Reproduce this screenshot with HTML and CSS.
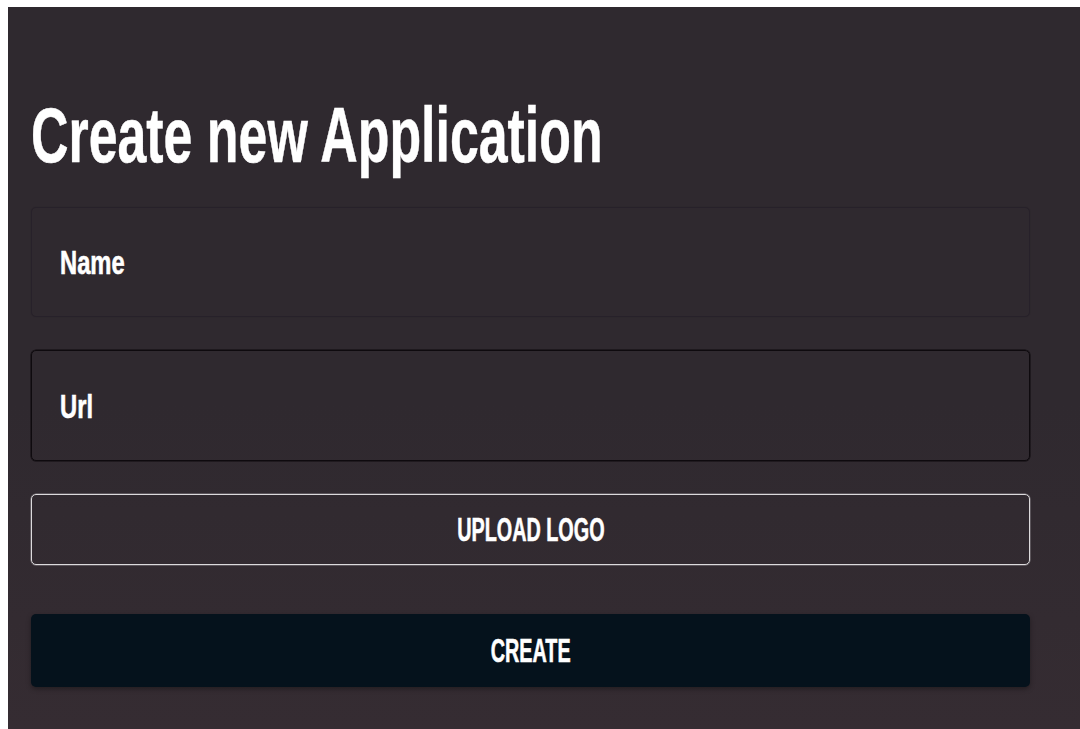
FILE: index.html
```html
<!DOCTYPE html>
<html lang="en">
<head>
<meta charset="utf-8">
<title>Create new Application</title>
<link rel="stylesheet" href="styles.css">
</head>
<body>
  <main class="panel">
    <form class="app-form" onsubmit="return false">
      <h1 class="title"><span class="narrow narrow-title">Create new Application</span></h1>

      <label class="field field-soft">
        <span class="narrow narrow-label">Name</span>
      </label>

      <label class="field field-dark">
        <span class="narrow narrow-label">Url</span>
      </label>

      <button type="button" class="btn btn-outline">
        <span class="narrow narrow-caps">UPLOAD LOGO</span>
      </button>

      <button type="submit" class="btn btn-solid">
        <span class="narrow narrow-caps">CREATE</span>
      </button>
    </form>
  </main>
</body>
</html>
```

FILE: styles.css
```css
html, body {
  height: 100%;
}

body {
  margin: 0;
  padding: 7px 0 0 8px;
  box-sizing: border-box;
  background: #ffffff;
  font-family: "Liberation Sans", Arial, sans-serif;
  color: #ffffff;
  overflow: hidden;
}

.panel {
  height: 100%;
  background: linear-gradient(180deg, #2f292f 0%, #2f292f 55%, #352c32 100%);
  padding: 89px 0 0 23px;
  box-sizing: border-box;
}

.app-form {
  width: 999px;
  display: flex;
  flex-direction: column;
}

/* condensed display face: Liberation Sans squeezed horizontally */
.narrow {
  display: inline-block;
  white-space: nowrap;
  font-weight: 700;
  -webkit-text-stroke: 0.6px #ffffff;
}

.narrow-title {
  transform: scaleX(0.665);
  transform-origin: left center;
  -webkit-text-stroke: 0.5px #ffffff;
}

.narrow-label {
  transform: scaleX(0.72);
  transform-origin: left center;
}

.narrow-caps {
  transform: scaleX(0.6);
  transform-origin: center center;
}

.title {
  margin: 0 0 33px 0;
  font-size: 78px;
  line-height: 78px;
  font-weight: 700;
}

.field {
  height: 110px;
  box-sizing: border-box;
  border-radius: 5px;
  display: flex;
  align-items: center;
  padding: 0 0 0 28px;
  font-size: 33px;
  line-height: 33px;
  margin-bottom: 33px;
}

.field-soft {
  border: 1px solid #27212a;
  box-shadow: 0 0 1px rgba(0, 0, 0, 0.25);
}

.field-dark {
  height: 111px;
  border: 1px solid #0e0a0e;
  box-shadow: 0 0 0 0.5px #0e0a0e;
  padding-top: 2px;
}

.btn {
  width: 100%;
  box-sizing: border-box;
  border-radius: 5px;
  color: #ffffff;
  font-family: inherit;
  font-size: 33px;
  line-height: 33px;
  display: flex;
  align-items: center;
  justify-content: center;
  padding: 0;
  cursor: pointer;
}

.btn-outline {
  height: 71px;
  background: transparent;
  border: 1px solid #dcdadc;
  box-shadow: 0 0 0 0.5px rgba(220, 218, 220, 0.5);
  margin-bottom: 49px;
}

.btn-solid {
  height: 73px;
  background: #05121c;
  border: none;
  box-shadow: 0 2px 5px rgba(0, 0, 0, 0.35);
}
```
